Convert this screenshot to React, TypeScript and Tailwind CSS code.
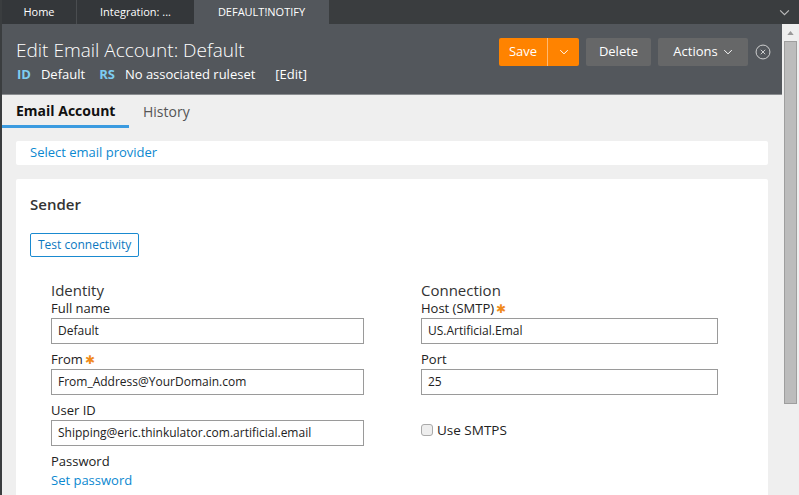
import React from 'react';

const font = { fontFamily: '"Open Sans", "Noto Sans", sans-serif' };

const ChevronDown: React.FC<{ className?: string }> = ({ className }) => (
  <svg viewBox="0 0 12 8" className={className} fill="none" stroke="currentColor" strokeWidth="1.3">
    <path d="M1 1.5 L6 6.5 L11 1.5" />
  </svg>
);

interface IFieldProps {
  label: string;
  value: string;
  required?: boolean;
}

const Field: React.FC<IFieldProps> = ({ label, value, required }) => (
  <div className="flex flex-col">
    <label className="text-[13px] leading-[17px] text-[#222] flex items-center">
      {label}
      {required && <span className="ml-[2px] text-[#f08a1c] text-[12px] leading-none">✱</span>}
    </label>
    <div className="mt-[1px] h-[26px] border border-[#9a9a9a] flex items-center px-[6px] text-[12px] text-[#222]">
      {value}
    </div>
  </div>
);

export default function App() {
  return (
    <div className="w-[799px] h-[495px] overflow-hidden bg-[#3a3d3f] flex flex-col" style={font}>
      {/* top tab strip */}
      <div className="h-[24px] flex items-stretch text-white text-[11px] shrink-0">
        <div className="ml-[2px] w-[74px] bg-[#34373a] flex items-center justify-center">Home</div>
        <div className="w-[1px] bg-[#4a4d50]" />
        <div className="w-[117px] bg-[#34373a] flex items-center justify-center">Integration: ...</div>
        <div className="w-[135px] bg-[#53575c] flex items-center justify-center">DEFAULT!NOTIFY</div>
        <div className="flex-1" />
        <div className="w-[30px] flex items-center justify-center text-[#bbb]">
          <ChevronDown className="w-[11px] h-[7px]" />
        </div>
      </div>

      <div className="flex flex-1 min-h-0">
        <div className="flex-1 ml-[2px] flex flex-col bg-[#efefef] min-w-0">
          {/* header */}
          <div className="h-[71px] bg-[#53575c] border-b border-[#8a8d90] flex items-start justify-between pl-[14px] pr-[11px] shrink-0">
            <div className="pt-[12px]">
              <div className="text-white text-[19px] font-light leading-[28px]">Edit Email Account: Default</div>
              <div className="flex items-center text-[13px] text-white leading-[18px] mt-[1px]">
                <span className="font-bold text-[#7dcdf2] ml-[1px]">ID</span>
                <span className="ml-[10px]">Default</span>
                <span className="ml-[14px] font-bold text-[#7dcdf2]">RS</span>
                <span className="ml-[10px]">No associated ruleset</span>
                <span className="ml-[20px]">[Edit]</span>
              </div>
            </div>
            <div className="flex items-center gap-[7px] mt-[14px]">
              <div className="flex h-[28px] rounded-[2px] bg-[#ff8300] text-white text-[13px]">
                <div className="w-[48px] flex items-center justify-center">Save</div>
                <div className="w-[1px] bg-[#ffb870]" />
                <div className="w-[31px] flex items-center justify-center">
                  <ChevronDown className="w-[10px] h-[6px]" />
                </div>
              </div>
              <div className="h-[28px] w-[65px] rounded-[2px] bg-[#666768] text-white text-[13px] flex items-center justify-center">
                Delete
              </div>
              <div className="h-[28px] w-[90px] rounded-[2px] bg-[#666768] text-white text-[13px] flex items-center justify-center gap-[5px]">
                Actions
                <ChevronDown className="w-[10px] h-[6px]" />
              </div>
              <svg viewBox="0 0 18 18" className="w-[16px] h-[16px] text-[#ddd]" fill="none" stroke="currentColor" strokeWidth="1">
                <circle cx="9" cy="9" r="7.8" />
                <path d="M6.5 6.5 L11.5 11.5 M11.5 6.5 L6.5 11.5" />
              </svg>
            </div>
          </div>

          {/* tabs */}
          <div className="flex items-end h-[33px] shrink-0">
            <div className="w-[127px] h-[33px] border-b-[3px] border-[#3b9be0] flex items-center pl-[14px] text-[14px] font-bold text-[#111]">
              Email Account
            </div>
            <div className="ml-[14px] h-[33px] flex items-center text-[14px] text-[#555]">History</div>
          </div>

          <div className="px-[14px] pt-[13px] flex flex-col gap-[14px]">
            <div className="h-[24px] bg-white rounded-[2px] flex items-center px-[14px] text-[13px] text-[#0b88d0]">
              Select email provider
            </div>

            <div className="bg-white rounded-[2px] h-[340px] px-[14px] pt-[14px]">
              <div className="text-[15px] font-semibold text-[#333] leading-[22px]">Sender</div>
              <div className="mt-[18px] inline-flex h-[24px] px-[7px] items-center border border-[#1a8ad0] rounded-[2px] text-[12px] text-[#0b78c0]">
                Test connectivity
              </div>

              <div className="flex mt-[23px] pl-[21px]">
                <div className="w-[313px] flex flex-col">
                  <div className="text-[15px] text-[#333] leading-[20px] font-medium">Identity</div>
                  <div className="flex flex-col gap-[7px]">
                    <Field label="Full name" value="Default" />
                    <Field label="From" value="From_Address@YourDomain.com" required />
                    <Field label="User ID" value="Shipping@eric.thinkulator.com.artificial.email" />
                    <div className="flex flex-col">
                      <span className="text-[13px] leading-[17px] text-[#222]">Password</span>
                      <span className="mt-[2px] text-[13px] leading-[17px] text-[#0b88d0]">Set password</span>
                    </div>
                  </div>
                </div>
                <div className="w-[297px] ml-[57px] flex flex-col">
                  <div className="text-[15px] text-[#333] leading-[20px] font-medium">Connection</div>
                  <div className="flex flex-col gap-[7px]">
                    <Field label="Host (SMTP)" value="US.Artificial.Emal" required />
                    <Field label="Port" value="25" />
                    <div className="flex items-center mt-[19px] text-[13.5px] text-[#222] leading-[18px]">
                      <span className="w-[12px] h-[12px] rounded-[3px] border border-[#aaa] bg-[#eee]" />
                      <span className="ml-[4px]">Use SMTPS</span>
                    </div>
                  </div>
                </div>
              </div>
            </div>
          </div>
        </div>

        {/* scrollbar */}
        <div className="w-[17px] bg-[#efefef] flex flex-col items-center shrink-0">
          <svg viewBox="0 0 8 5" className="w-[7px] h-[4px] mt-[7px] text-[#999]" fill="currentColor">
            <path d="M0 5 L4 0 L8 5 Z" />
          </svg>
          <div className="mt-[6px] w-[13px] h-[363px] bg-[#bcbcbc] border border-[#9e9e9e]" />
        </div>
      </div>
    </div>
  );
}
